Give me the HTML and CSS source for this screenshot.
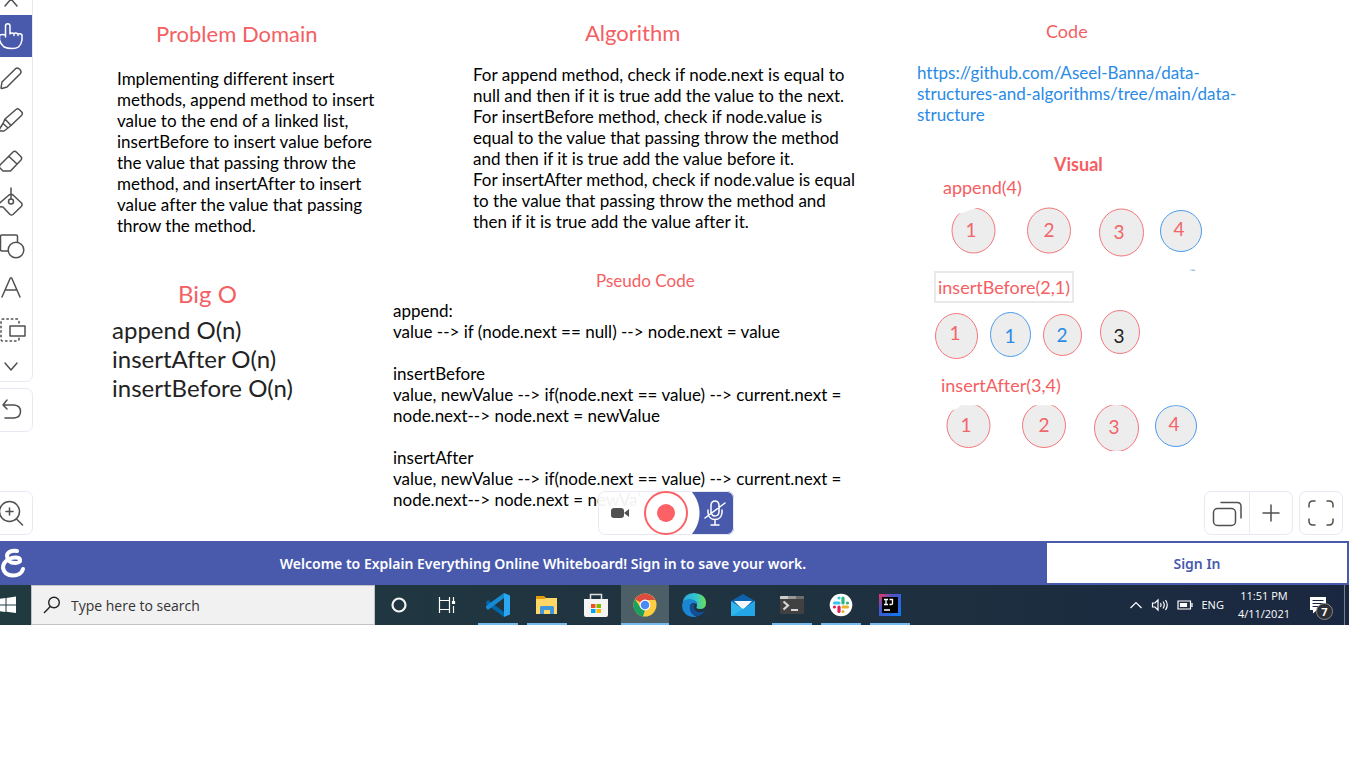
FILE: index.html
```html
<!DOCTYPE html>
<html lang="en">
<head>
<meta charset="utf-8">
<title>Explain Everything Whiteboard</title>
<link rel="stylesheet" href="styles.css">
</head>
<body>
<div class="screen">
  <main class="board">
    <h2 class="note title title-problem">Problem Domain</h2>
    <p class="note body note-problem">Implementing different insert<br>methods, append method to insert<br>value to the end of a linked list,<br>insertBefore to insert value before<br>the value that passing throw the<br>method, and insertAfter to insert<br>value after the value that passing<br>throw the method.</p>

    <h2 class="note title title-algorithm">Algorithm</h2>
    <p class="note body note-algorithm">For append method, check if node.next is equal to<br>null and then if it is true add the value to the next.<br>For insertBefore method, check if node.value is<br>equal to the value that passing throw the method<br>and then if it is true add the value before it.<br>For insertAfter method, check if node.value is equal<br>to the value that passing throw the method and<br>then if it is true add the value after it.</p>

    <h2 class="note title small title-code">Code</h2>
    <a class="note body link note-code" href="https://github.com/Aseel-Banna/data-structures-and-algorithms/tree/main/data-structure">https://github.com/Aseel-Banna/data-<br>structures-and-algorithms/tree/main/data-<br>structure</a>

    <h2 class="note title large title-bigo">Big O</h2>
    <p class="note list note-bigo">append O(n)<br>insertAfter O(n)<br>insertBefore O(n)</p>

    <h2 class="note title small title-pseudo">Pseudo Code</h2>
    <p class="note body note-pseudo">append:<br>value --&gt; if (node.next == null) --&gt; node.next = value<br><br>insertBefore<br>value, newValue --&gt; if(node.next == value) --&gt; current.next =<br>node.next--&gt; node.next = newValue<br><br>insertAfter<br>value, newValue --&gt; if(node.next == value) --&gt; current.next =<br>node.next--&gt; node.next = newValue</p>

    <h2 class="note title small strong title-visual">Visual</h2>
    <h3 class="note title small title-append">append(4)</h3>
    <h3 class="note title small title-before">insertBefore(2,1)</h3>
    <h3 class="note title small title-after">insertAfter(3,4)</h3>

    <svg class="note diagram" width="330" height="260" viewBox="900 200 330 260">
      <g class="node">
        <ellipse cx="973.500" cy="230.500" rx="21.500" ry="22.500"/><ellipse cx="1049" cy="230.500" rx="21.500" ry="22.500"/><ellipse cx="1121.500" cy="232.500" rx="22" ry="23.500"/>
        <ellipse class="blue" cx="1181" cy="231" rx="20.500" ry="20.500"/>
        <ellipse cx="956.500" cy="336" rx="21" ry="22.500"/><ellipse class="blue" cx="1010.500" cy="334.500" rx="20" ry="22"/><ellipse cx="1062.500" cy="335" rx="19" ry="20.500"/><ellipse cx="1120" cy="332" rx="19.500" ry="21.500"/>
        <ellipse cx="968.500" cy="425.500" rx="21.500" ry="22"/><ellipse cx="1044" cy="425.500" rx="21.500" ry="22"/><ellipse cx="1116.500" cy="428" rx="22" ry="23.500"/>
        <ellipse class="blue" cx="1176" cy="426" rx="20.500" ry="20.500"/>
      </g>
      <path class="erased" d="M945 200h33v7.500l-16 5.500-5 1-12 9zM940 400h35v4.500l-14 1-4 3-17 7zM940 400h260v5.200H940zM940 451h260v5H940z"/>
      <path class="speck" d="M1189 270q4-1 6 0v1z"/>
      <g class="digit">
        <text x="971" y="237">1</text><text x="1049" y="237">2</text><text x="1119" y="239">3</text><text x="1179" y="236">4</text>
        <text x="955" y="340">1</text><text class="blue" x="1010" y="343">1</text><text class="blue" x="1062" y="342">2</text><text class="dark" x="1119" y="343">3</text>
        <text x="966" y="432">1</text><text x="1044" y="432">2</text><text x="1114" y="434">3</text><text x="1174" y="431">4</text>
      </g>
    </svg>

    <nav class="tools" aria-label="Tools">
      <button class="tool arrow" aria-label="Scroll up"><svg width="28" height="16" viewBox="0 0 28 16"><path d="M8 12l6-7 6 7"/></svg></button>
      <button class="tool selected" aria-label="Hand"><svg width="28" height="28" viewBox="0 0 28 28"><path d="M8.500 15V4a2 2 0 0 1 4.500 0v8M13 11.500q2-1 4 0v2M17 11.500q2-1 4 .5v1.500M21 12q3-.5 4 1v5q-.5 4-3.500 7-2 1.500-6.500 1.500T7 25Q3.500 22 2.500 18V13.500q1.500-1.500 6-.5"/></svg></button>
      <button class="tool" aria-label="Pencil"><svg width="28" height="28" viewBox="0 0 28 28"><path d="M4 24l1-6L18.500 4.700q1.800-1.500 3.500 0l1.500 1.500q1.300 1.600 0 3.300L10 23l-5 1.500z"/></svg></button>
      <button class="tool" aria-label="Highlighter"><svg width="28" height="28" viewBox="0 0 28 28"><path d="M8 13L19 3.500q1.700-1.300 3.200 0l2.500 2.500q1.300 1.600 0 3.200L14 19.500zM8 13l-2 4.500 5 4.500 3-2.500M6 17.500L2.500 23v2l4.500 0 4-3M8 13l6 6.500"/></svg></button>
      <button class="tool" aria-label="Eraser"><svg width="28" height="28" viewBox="0 0 28 28"><path d="M3 17L16 4q1.700-1.500 3.300 0L24 8.700q1.400 1.600 0 3.300L13.500 23H6l-3-3q-1.300-1.500 0-3zM12 8.500l8 7.500"/></svg></button>
      <button class="tool" aria-label="Fill"><svg width="28" height="28" viewBox="0 0 28 28"><path d="M14 -2v11M16 5l8.500 8q1.200 1.600 0 3.200L16 24.500q-1.500 1.200-3 0L6 17l-5-.5v-2L12 5q2-1.300 4 0z"/><circle cx="14" cy="11.500" r="2.500"/></svg></button>
      <button class="tool" aria-label="Shapes"><svg width="28" height="28" viewBox="0 0 28 28"><path d="M11 19H5q-1.500 0-1.500-1.500V4.500Q3.500 3 5 3h14q1.500 0 1.500 1.500V10"/><circle cx="19" cy="18" r="7.800"/></svg></button>
      <button class="tool" aria-label="Text"><svg width="28" height="28" viewBox="0 0 28 28"><path d="M5 23l8.300-19h1.400L23 23M8 16h12"/></svg></button>
      <button class="tool" aria-label="Select"><svg width="28" height="28" viewBox="0 0 28 28"><path stroke-dasharray="1.500 3" d="M22 7V5q0-2-2-2H6Q4 3 4 5v18q0 2 2 2h14q2 0 2-2v-2"/><path d="M13 10h15v10H13z"/></svg></button>
      <button class="tool arrow last" aria-label="Scroll down"><svg width="28" height="16" viewBox="0 0 28 16"><path d="M8 5l6 7 6-7"/></svg></button>
    </nav>
    <div class="panel undo"><button class="tool" aria-label="Undo"><svg width="28" height="28" viewBox="0 0 28 28"><path d="M10 4L6 9l4 4M6 9h11q6.500.5 6.500 6.500T17 22H8"/></svg></button></div>
    <div class="panel zoom"><button class="tool" aria-label="Zoom in"><svg width="28" height="28" viewBox="0 0 28 28"><circle cx="12.500" cy="12.500" r="10"/><path d="M9 12.500h7M12.500 9v7M19.500 20l6 6"/></svg></button></div>

    <div class="recorder">
      <button class="camera" aria-label="Camera"><svg width="20" height="12" viewBox="0 0 20 12"><rect x="1" y="1" width="13" height="10" rx="3"/><path d="M14 6l5-4v8z"/></svg></button>
      <button class="record" aria-label="Record"><span class="dot"></span></button>
      <button class="mic" aria-label="Microphone off"><svg width="28" height="30" viewBox="0 0 28 30"><path d="M10 15V7q.5-4 4-4t4 4v7q-.5 4-4 4-2 0-3-1.500M7 12v3q1 6.500 7 6.500t7-6.500v-3M14 21.500V27M10 27h8M4 20L24 5"/></svg></button>
    </div>

    <div class="view-controls">
      <div class="group">
        <button aria-label="Slides"><svg width="32" height="28" viewBox="0 0 32 28"><rect x="2.500" y="9.500" width="22" height="17" rx="4"/><path d="M10 3.500h16q4 0 4 4V19"/></svg></button>
        <button aria-label="Add slide"><svg width="18" height="18" viewBox="0 0 18 18"><path d="M1 9h16M9 1v16"/></svg></button>
      </div>
      <div class="group">
        <button aria-label="Full screen"><svg width="28" height="28" viewBox="0 0 28 28"><path d="M2 8V6q0-4 4-4h2M20 2h2q4 0 4 4v2M26 20v2q0 4-4 4h-2M8 26H6q-4 0-4-4v-2"/></svg></button>
      </div>
    </div>
  </main>

  <section class="banner">
    <svg class="brand" width="26" height="32" viewBox="0 0 26 32"><path d="M17 4C12 3 7 5 7 9c0 4 3 7 8 7 4 0 5.500-1.500 5-3.500C19 10 13 10 9 12c-4 2-6 5-6 9 1 5 5 7.500 10 7.500 5 0 9-2.500 10-6.500"/></svg>
    <p>Welcome to Explain Everything Online Whiteboard! Sign in to save your work.</p>
    <button class="signin">Sign In</button>
  </section>

  <footer class="taskbar">
    <button class="start" aria-label="Start"><svg width="17" height="18" viewBox="0 0 17 18"><path d="M0 3l6.500-1v6.500H0zM7.500 2L17 .5v8H7.500zM0 9.500h6.500V16L0 15zM7.500 9.500H17V17l-9.500-1.300z"/></svg></button>
    <label class="search">
      <svg width="18" height="18" viewBox="0 0 18 18"><circle cx="11" cy="6.500" r="5.300"/><path d="M7.300 10.500L1 17"/></svg>
      <input type="text" placeholder="Type here to search" aria-label="Type here to search">
    </label>
    <div class="apps">
      <button aria-label="Cortana"><svg width="24" height="24" viewBox="0 0 24 24"><circle cx="11" cy="12" r="6.500" fill="none" stroke="#f4f4f4" stroke-width="2.200"/></svg></button>
      <button aria-label="Task view"><svg width="24" height="24" viewBox="0 0 24 24" fill="none" stroke="#fff" stroke-width="1.200"><path d="M2.500 4v3.500h10V4M2.500 20v-3.500h10V20M2.500 7.500v9M12.500 7.500v9M16.500 4v5M16.500 13v7"/><path fill="#fff" d="M15.500 8.500h2v2h-2z"/></svg></button>
      <button class="open" aria-label="Visual Studio Code"><svg width="24" height="24" viewBox="0 0 24 24"><path fill="#0066a8" d="M0 9l2-2 16 12v5L0 11z"/><path fill="#168bd4" d="M0 15l2 2L18 5V0L0 13z"/><path fill="#2aa6f2" d="M18 0l6 2.500v19L18 24z"/></svg></button>
      <button class="open" aria-label="File Explorer"><svg width="24" height="24" viewBox="0 0 24 24"><path fill="#e39b0b" d="M1 3h8l2 2h11v5H1z"/><path fill="#ffd766" d="M1 6h8l2-1h11v16H1z"/><path fill="#3f97dc" d="M5 21v-7l1-1h12l1 1v7h-4v-4H9v4z"/></svg></button>
      <button aria-label="Microsoft Store"><svg width="24" height="24" viewBox="0 0 24 24"><path fill="none" stroke="#ddd" stroke-width="1.500" d="M6.500 7V1.500h11V7"/><path fill="#f4f4f4" d="M0 6h24v16q0 2-2 2H2q-2 0-2-2z"/><path fill="#f25022" d="M7 11h4.500v4H7z"/><path fill="#7fba00" d="M12.500 11H17v4h-4.500z"/><path fill="#00a4ef" d="M7 16h4.500v4H7z"/><path fill="#ffb900" d="M12.500 16H17v4h-4.500z"/></svg></button>
      <button class="open active" aria-label="Google Chrome"><svg width="24" height="24" viewBox="0 0 24 24"><circle cx="12" cy="12" r="11.500" fill="#ffcd40"/><path fill="#dd4b3e" d="M12 12L2 6.300A11.500 11.500 0 0 1 22.200 7H12z"/><path fill="#1aa15f" d="M2 6.300L7.500 14.500 12 17l-2 6.500A11.500 11.500 0 0 1 2 6.300z"/><circle cx="12" cy="12" r="5.400" fill="#fff"/><circle cx="12" cy="12" r="4.300" fill="#4a8af4"/></svg></button>
      <button aria-label="Microsoft Edge"><svg width="24" height="24" viewBox="0 0 24 24"><defs><linearGradient id="edge"><stop offset="0" stop-color="#2aa5dd"/><stop offset=".55" stop-color="#31c3d3"/><stop offset="1" stop-color="#6de04f"/></linearGradient></defs><path fill="url(#edge)" d="M.5 10Q2 0 12 0q12 1 12 10 0 6-6 6-5 0-3-3 1-5-5-6Q3 6 .5 10z"/><path fill="#1b86d3" d="M0 12Q1 6 8 6q7 1 7 6-1-2-4-2-4 1-3 6 1 6 7 7.500-3 .8-7 0Q0 21 0 12z"/><path fill="#134f96" d="M11 10q-5 3-2 9 3 4.500 8 4 4-1.500 6-5-5 2.500-9 0-3.500-3-1.500-6z"/></svg></button>
      <button aria-label="Mail"><svg width="24" height="24" viewBox="0 0 24 24"><path fill="#0d62ab" d="M0 8l12-7 12 7v4H0z"/><path fill="#f4f7fb" d="M3 8h18l-9 9z"/><path fill="#31b7ef" d="M0 8l12 8 12-8v15H0z"/><path fill="#1590dd" d="M0 23l24-14v14z" opacity=".45"/></svg></button>
      <button class="open" aria-label="Terminal"><svg width="24" height="24" viewBox="0 0 24 24"><rect y="3" width="24" height="18" rx="1" fill="#414141"/><path fill="#ccc" d="M0 6V4q0-1 1-1h7v3z"/><path fill="#999" d="M8 3h8v3H8z"/><path fill="#6d6d6d" d="M16 3h7q1 0 1 1v2h-8z"/><path fill="none" stroke="#d7d7d7" stroke-width="2.200" d="M3.500 8.500L8 12.500l-4.500 4M11 17h7"/></svg></button>
      <button class="open" aria-label="Slack"><svg width="24" height="24" viewBox="0 0 24 24"><circle cx="12" cy="12" r="11.300" fill="#fff"/><g fill="none" stroke-width="3.200" stroke-linecap="round"><path stroke="#36c5f0" d="M10 5v0M5.500 10H10"/><path stroke="#2eb67d" d="M14 5v5M18.500 10v0"/><path stroke="#ecb22e" d="M14 14h4.500M14 18.500v0"/><path stroke="#e01e5a" d="M5.500 14v0M10 14v4.500"/></g></svg></button>
      <button class="open" aria-label="IntelliJ IDEA"><svg width="24" height="24" viewBox="0 0 24 24"><defs><linearGradient id="idea" x2="1" y2="1"><stop offset="0" stop-color="#f5315d"/><stop offset=".35" stop-color="#4b55c8"/><stop offset="1" stop-color="#087cfa"/></linearGradient></defs><path fill="url(#idea)" d="M1 1h22v22H1z"/><path d="M4 4h16v16H4z"/><path fill="none" stroke="#fff" stroke-width="1.300" d="M6 6.500h4M8 6.500v5M6 11.500h4M11.500 6.500h3v4q0 1-1.500 1h-1.500M6 17h6"/></svg></button>
    </div>
    <div class="tray">
      <button aria-label="Hidden icons"><svg width="14" height="10" viewBox="0 0 14 10"><path d="M1.500 8L7 2.500 12.500 8"/></svg></button>
      <button aria-label="Volume"><svg width="18" height="14" viewBox="0 0 18 14"><path d="M1.500 5v4H4l3 3V2L4 5zM9.500 5q1.300 2 0 4M12 3.500q2.500 3.500 0 7M14.500 2q3.500 5 0 10"/></svg></button>
      <button aria-label="Battery"><svg width="16" height="10" viewBox="0 0 16 10"><path d="M1 1h12.500v8H1zM15 3v4"/><path fill="#fff" d="M3.500 3.500h6v3h-6z"/></svg></button>
      <button class="lang">ENG</button>
      <time class="clock">11:51 PM<br>4/11/2021</time>
      <button class="alerts" aria-label="Notifications"><svg width="18" height="18" viewBox="0 0 18 18"><path fill="#fff" stroke="none" d="M1 1h16v13H8l-4 3.500V14H1z"/><path stroke="#1a2740" d="M3.500 4.500h11M3.500 7.500h11M3.500 10.500h7"/></svg><span class="count">7</span></button>
    </div>
  </footer>
</div>
</body>
</html>
```
FILE: styles.css
```css
* { box-sizing: border-box; }
body { margin: 0; background: #fff; font-family: Lato, sans-serif; color: #000; font-variant-ligatures: none; }
button { padding: 0; border: 0; background: none; font: inherit; color: inherit; display: flex; align-items: center; justify-content: center; flex: none; }
svg { display: block; flex: none; overflow: visible; }
p, h2, h3 { margin: 0; }
.screen { margin-right: 17px; display: flex; flex-direction: column; }

/* Whiteboard canvas */
.board { position: relative; min-height: 541px; overflow: hidden; }
.note { position: absolute; white-space: nowrap; }
.body { font-size: 17px; line-height: 21px; }
.list { font-size: 24px; line-height: 29px; color: #222; }
.title { font-size: 22px; line-height: 26px; font-weight: 400; color: #f55e62; }
.small { font-size: 18px; line-height: 22px; }
.large { font-size: 24px; line-height: 28px; }
.strong { font-weight: 700; }
.link { color: #2a8be6; text-decoration: none; }
.title-problem { left: 156px; top: 21px; }
.note-problem { left: 117px; top: 68px; }
.title-algorithm { left: 585px; top: 20px; }
.note-algorithm { left: 473px; top: 64px; }
.title-code { left: 1046px; top: 20px; }
.note-code { left: 917px; top: 62px; }
.title-bigo { left: 178px; top: 280px; }
.note-bigo { left: 112px; top: 315px; }
.title-pseudo { left: 596px; top: 270px; font-size: 17px; }
.note-pseudo { left: 393px; top: 300px; }
.title-visual { left: 1054px; top: 153px; }
.title-append { left: 943px; top: 176px; }
.title-before { left: 934px; top: 271px; padding: 3px 2px; border: 2px solid #e9e9e9; }
.title-after { left: 941px; top: 374px; }
.diagram { left: 900px; top: 200px; }
.node ellipse { fill: #ededed; stroke: #f4777a; stroke-width: 1; }
.node .blue { stroke: #4b9cec; }
.erased { fill: #fff; }
.speck { fill: #8aa9c8; }
.digit { font-size: 19px; text-anchor: middle; fill: #f2656a; }
.digit .blue { fill: #2a8be6; }
.digit .dark { fill: #222; }

/* Floating controls */
.tools, .panel, .group { background: #fff; border: 1px solid #e8e9f3; }
.tools { position: absolute; left: -11px; top: -12px; border-radius: 0 0 7px 7px; }
.tool { width: 42px; height: 42px; }
.tool.arrow { height: 26px; }
.tool.last { height: 30px; }
.tool.selected { background: #495aad; color: #fff; }
.tool svg, .group svg, .mic svg { fill: none; stroke: #505050; stroke-width: 1.5; stroke-linecap: round; stroke-linejoin: round; }
.tool.selected svg, .mic svg { stroke: #fff; }
.panel { position: absolute; left: -11px; border-radius: 7px; }
.undo { top: 388px; }
.zoom { bottom: 6px; }
.recorder { position: absolute; left: 598px; bottom: 6px; display: flex; height: 44px; border-radius: 7px; box-shadow: inset 0 0 0 1px #e8e9f3; background: radial-gradient(circle 33px at 69px 50%, #fff 32px, transparent 33px), linear-gradient(90deg, rgba(255,255,255,.94) 80px, #495aad 80px); }
.camera { width: 44px; }
.camera svg { fill: #505050; }
.record { width: 44px; height: 44px; margin-left: 2px; border: 2px solid #fb6165; border-radius: 50%; background: #fff; }
.dot { width: 18px; height: 18px; border-radius: 50%; background: #fb6165; }
.mic { width: 46px; padding-left: 7px; }
.view-controls { position: absolute; right: 6px; bottom: 6px; display: flex; gap: 6px; }
.group { display: flex; height: 44px; border-radius: 7px; }
.group button { width: 42px; }
.group button:first-child:not(:last-child) { width: 45px; border-right: 1px solid #e8e9f3; }

/* Sign-in banner */
.banner { display: flex; align-items: stretch; height: 44px; background: #495aad; color: #fff; font: 600 14px "Noto Sans", sans-serif; }
.brand { margin-right: 15px; align-self: center; fill: none; stroke: #fff; stroke-width: 4; stroke-linecap: round; }
.banner p { flex: 1; align-self: center; text-align: center; }
.signin { width: 304px; background: #fff; color: #495aad; border: 2px solid #495aad; }

/* Windows taskbar */
.taskbar { display: flex; height: 40px; background: linear-gradient(90deg, #213a40, #1f3240 60%, #1a2740); color: #fff; font: 11px/18px "Open Sans", sans-serif; }
.start { width: 31px; justify-content: flex-start; }
.start svg { fill: #fff; margin-left: -1px; }
.search { flex: none; width: 344px; display: flex; align-items: center; gap: 10px; padding: 0 11px; background: #f1f1f1; border: 1px solid #c3c3c3; }
.search svg { fill: none; stroke: #222; stroke-width: 1.400; }
.search input { flex: 1; min-width: 0; border: 0; padding: 0; outline: 0; background: none; font: 14px "Open Sans", sans-serif; }
.search input::placeholder { color: #333; opacity: 1; }
.apps { display: flex; gap: 1px; padding-left: 1px; }
.apps button { position: relative; width: 48px; }
.open::after { content: ""; position: absolute; left: 4px; right: 4px; bottom: 0; height: 2px; background: #76b9ed; }
.apps .active { background: #4d5f66; }
.active::after { left: 0; right: 0; }
.tray { margin-left: auto; display: flex; align-items: center; gap: 8px; padding-right: 8px; border-right: 4px solid #1a2740; box-shadow: inset -1px 0 #777f8d; }
.tray svg { fill: none; stroke: #fff; stroke-width: 1.200; }
.clock { text-align: center; margin-left: 6px; }
.alerts { position: relative; width: 39px; height: 40px; }
.count { position: absolute; left: 18px; top: 18px; width: 17px; height: 17px; border: 1px solid #888; border-radius: 50%; background: #2d2f35; font-size: 11px; font-weight: 700; line-height: 15px; }
```
